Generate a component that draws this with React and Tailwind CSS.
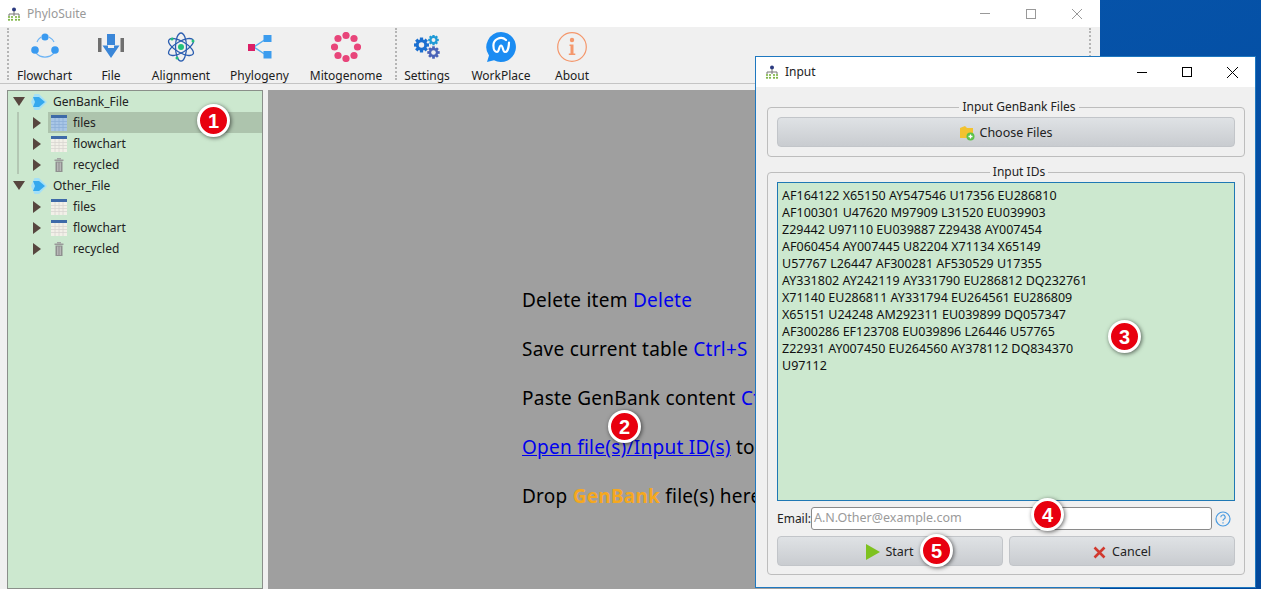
import React from "react";

const font = "font-['Noto_Sans','Noto_Sans_CJK_SC',sans-serif]";

// small tree logo used in both title bars
function AppLogo() {
  return (
    <svg width="14" height="14" viewBox="0 0 14 14">
      <circle cx="7" cy="2.5" r="2" fill="#2b3a80" />
      <path d="M7 4v3M2 9V7h10v2M7 7v2" stroke="#777" strokeWidth="1" fill="none" />
      {[2, 5, 9, 12].map((x) => (
        <g key={x} fill="#7cb342">
          <circle cx={x} cy="10" r="1.1" />
          <circle cx={x} cy="12.8" r="1.1" />
        </g>
      ))}
    </svg>
  );
}

function FlowchartIcon() {
  return (
    <svg width="30" height="30" viewBox="0 0 30 30">
      <path d="M7 10A12 12 0 0 1 11 5M19 5a12 12 0 0 1 5 5M6 21a12 12 0 0 0 18 0" stroke="#6db4f5" strokeWidth="1.2" fill="none" />
      <circle cx="15" cy="5" r="3.6" fill="#3a9af0" />
      <circle cx="5" cy="18" r="3.8" fill="#3a9af0" />
      <circle cx="25" cy="18" r="3.8" fill="#3a9af0" />
    </svg>
  );
}

function FileIcon() {
  return (
    <svg width="28" height="26" viewBox="0 0 28 26">
      <rect x="1" y="4" width="3.500" height="14" fill="#6f6f6f" />
      <rect x="23.500" y="4" width="3.500" height="14" fill="#6f6f6f" />
      <rect x="10" y="0" width="8" height="11" fill="#3a86d8" />
      <path d="M5.500 11.500H11V14h6v-2.500h5.500L14 24z" fill="#3a86d8" />
    </svg>
  );
}

function AlignmentIcon() {
  return (
    <svg width="30" height="30" viewBox="0 0 30 30" fill="none" stroke="#2a5db0" strokeWidth="1.300">
      <ellipse cx="15" cy="15" rx="14" ry="5.500" transform="rotate(30 15 15)" />
      <ellipse cx="15" cy="15" rx="14" ry="5.500" transform="rotate(-30 15 15)" />
      <ellipse cx="15" cy="15" rx="14" ry="5.500" transform="rotate(90 15 15)" />
      <circle cx="15" cy="15" r="3" fill="#22c07a" stroke="none" />
      <circle cx="27" cy="9" r="1.500" fill="#22c07a" stroke="none" />
      <circle cx="6" cy="7" r="1.500" fill="#22c07a" stroke="none" />
      <circle cx="11" cy="26" r="1.500" fill="#22c07a" stroke="none" />
    </svg>
  );
}

function PhylogenyIcon() {
  return (
    <svg width="24" height="24" viewBox="0 0 24 24">
      <path d="M6 12l12-8M6 12l12 8" stroke="#5aaef0" strokeWidth="1.500" />
      <rect x="0" y="9" width="7" height="7" fill="#dc1f66" />
      <rect x="15.500" y="0" width="8" height="7" fill="#3c9cee" />
      <rect x="15.500" y="16" width="8" height="7.500" fill="#3c9cee" />
    </svg>
  );
}

function MitogenomeIcon() {
  const dots = [[15, 3.500], [23, 6.500], [26.500, 15], [23, 23.500], [15, 26.500], [7, 23.500], [3.500, 15], [7, 6.500]];
  return (
    <svg width="30" height="30" viewBox="0 0 30 30">
      {dots.map(([x, y]) => (
        <circle key={x + "-" + y} cx={x} cy={y} r="3.600" fill="#e8457a" />
      ))}
    </svg>
  );
}

function Gear({ x, y, r, color }) {
  const teeth = [0, 45, 90, 135];
  return (
    <g transform={`translate(${x} ${y})`}>
      {teeth.map((a) => (
        <rect key={a} x={-r * 0.25} y={-r * 1.15} width={r * 0.5} height={r * 2.3} fill={color} transform={`rotate(${a})`} />
      ))}
      <circle r={r * 0.88} fill={color} />
      <circle r={r * 0.42} fill="#f0f0f0" />
    </g>
  );
}

function SettingsIcon() {
  return (
    <svg width="26" height="24" viewBox="0 0 26 24">
      <Gear x={7.500} y={10} r={6.500} color="#1a6fd0" />
      <Gear x={19.500} y={5} r={4.600} color="#1f9ad6" />
      <Gear x={19.500} y={17.500} r={5.400} color="#4a63b8" />
    </svg>
  );
}

function WorkPlaceIcon() {
  return (
    <svg width="30" height="30" viewBox="0 0 30 30">
      <path d="M15 0a15 15 0 1 1-7 28.300L1 30l2-6.500A15 15 0 0 1 15 0z" fill="#1b8cf2" />
      <path d="M23 10.500c0 0-.3 9.500-4 9.500-2.500 0-1.800-6.500-4-6.500s-1.500 6.500-4 6.500c-2 0-3.500-2.500-3.500-5.500A7.500 7.500 0 0 1 20 8" fill="none" stroke="#fff" strokeWidth="2.200" strokeLinecap="round" />
    </svg>
  );
}

function AboutIcon() {
  return (
    <svg width="30" height="30" viewBox="0 0 30 30">
      <circle cx="15" cy="15" r="14.300" fill="none" stroke="#f4976c" strokeWidth="1.200" />
      <circle cx="15" cy="8" r="2.200" fill="#f4976c" />
      <path d="M12.500 12.500h4v9h1.800v1.600h-6.500v-1.600h1.700v-7.400h-1z" fill="#f4976c" />
    </svg>
  );
}

function ToolItem({ label, width, children }) {
  return (
    <div className={`flex flex-col items-center justify-between h-[56px] pt-[5px] ${width}`}>
      <div className="h-[30px] flex items-center justify-center">{children}</div>
      <span className="text-[12px] leading-[15px] text-[#1c1c1c] whitespace-nowrap">{label}</span>
    </div>
  );
}

function Dots() {
  return <div className="w-0 h-[52px] border-l-2 border-dotted border-[#b5b5b5] mt-[1px]" />;
}

function FolderArrow() {
  return (
    <svg width="16" height="16" viewBox="0 0 16 16">
      <path d="M0 8l3.500-8h4.500l8 8-8 8H3.500z" fill="#a4e0f7" />
      <path d="M2 3h6l6 5-6 5H2l2-5z" fill="#35a8ee" />
    </svg>
  );
}

function TableIcon({ active }) {
  return (
    <svg width="16" height="16" viewBox="0 0 16 16">
      <rect x="0" y="0" width="16" height="16" fill={active ? "#a9c6e6" : "#f2f0e8"} />
      <rect x="0" y="0" width="16" height="3" fill="#3e6aa8" />
      <path d="M0 6.500h16M0 9.500h16M0 12.500h16M4 3v13M8 3v13M12 3v13" stroke={active ? "#8eb0d8" : "#d8d6d0"} strokeWidth="0.800" />
    </svg>
  );
}

function TrashIcon() {
  return (
    <svg width="16" height="16" viewBox="0 0 16 16">
      <rect x="6" y="1" width="4" height="1.500" fill="#a3a3a3" />
      <rect x="3.500" y="2.500" width="9" height="1.500" fill="#9a9a9a" />
      <path d="M4.500 4.500h7V15h-7z" fill="#8f8f8f" />
      <path d="M6.500 5.500V14M8 5.500V14M9.500 5.500V14" stroke="#c9c9c9" strokeWidth="0.700" />
    </svg>
  );
}

function Caret({ open }) {
  if (open) {
    return (
      <svg width="12" height="9" viewBox="0 0 12 9">
        <path d="M0 0h12L6 9z" fill="#57463f" />
      </svg>
    );
  }
  return (
    <svg width="8" height="12" viewBox="0 0 8 12">
      <path d="M0 0v12L8 6z" fill="#57463f" />
    </svg>
  );
}

function RootRow({ label }) {
  return (
    <div className="flex items-center h-[21px] pl-[4px]">
      <div className="w-[14px] flex justify-center"><Caret open /></div>
      <div className="ml-[5px]"><FolderArrow /></div>
      <span className="ml-[6px] text-[12px] text-[#222]">{label}</span>
    </div>
  );
}

function ChildRow({ label, icon, active }) {
  return (
    <div className="flex items-center h-[21px]">
      <div className="w-[40px] flex justify-end pr-[7px]">
        <Caret />
      </div>
      <div className={`flex items-center flex-1 h-[21px] pl-[3px] ${active ? "bg-[#adc4ad]" : ""}`}>
        {icon}
        <span className="ml-[6px] text-[12px] text-[#222]">{label}</span>
      </div>
    </div>
  );
}

function Badge({ n, className }) {
  return (
    <div className={`absolute w-[33px] h-[33px] rounded-full bg-[#e8000f] border-[3px] border-white shadow-[1px_1px_4px_rgba(0,0,0,0.6)] flex items-center justify-center text-white font-bold text-[20px] leading-none font-['Liberation_Sans',sans-serif] ${className}`}>
      {n}
    </div>
  );
}

function HelpLine({ children }) {
  return <p className="h-[49px] text-[19px] tracking-[0.25px] leading-[49px] text-black whitespace-nowrap">{children}</p>;
}

function GroupBox({ title, className, children }) {
  return (
    <div className={`relative border border-[#bdbdbd] rounded-[4px] ${className}`}>
      <span className="absolute -top-[9px] left-0 right-0 flex justify-center pl-[26px]">
        <span className="bg-[#f0f0f0] px-[3px] text-[12px] leading-[16px] text-[#222]">{title}</span>
      </span>
      {children}
    </div>
  );
}

function QtButton({ className, children }) {
  return (
    <div className={`flex items-center justify-center h-[30px] pt-[2px] rounded-[4px] border border-[#c2c5c9] bg-gradient-to-b from-[#dfe2e5] to-[#c9ccd0] text-[12.500px] text-[#222] ${className}`}>
      {children}
    </div>
  );
}

const ids = [
  "AF164122 X65150 AY547546 U17356 EU286810",
  "AF100301 U47620 M97909 L31520 EU039903",
  "Z29442 U97110 EU039887 Z29438 AY007454",
  "AF060454 AY007445 U82204 X71134 X65149",
  "U57767 L26447 AF300281 AF530529 U17355",
  "AY331802 AY242119 AY331790 EU286812 DQ232761",
  "X71140 EU286811 AY331794 EU264561 EU286809",
  "X65151 U24248 AM292311 EU039899 DQ057347",
  "AF300286 EF123708 EU039896 L26446 U57765",
  "Z22931 AY007450 EU264560 AY378112 DQ834370",
  "U97112",
];

export default function App() {
  return (
    <div className={`relative w-[1261px] h-[589px] overflow-hidden bg-gradient-to-br from-[#0a5cb4] to-[#02479a] ${font}`}>
      {/* main window */}
      <div className="w-[1100px] h-[589px] bg-[#f0f0f0] flex flex-col">
        <div className="h-[27px] bg-white flex items-center pl-[7px]">
          <AppLogo />
          <span className="ml-[6px] text-[12px] text-[#999]">PhyloSuite</span>
          <div className="ml-auto flex items-center gap-[36px] pr-[18px]">
            <div className="w-[10px] h-px bg-[#999]" />
            <div className="w-[10px] h-[10px] border border-[#999]" />
            <svg width="10" height="10" viewBox="0 0 10 10"><path d="M0 0l10 10M10 0L0 10" stroke="#999" /></svg>
          </div>
        </div>

        <div className="h-[57px] flex border-b border-[#c4c4c4] pl-[7px] pr-[9px]">
          <Dots />
          <div className="flex ml-[3px]">
            <ToolItem label="Flowchart" width="w-[65px]"><FlowchartIcon /></ToolItem>
            <ToolItem label="File" width="w-[68px]"><FileIcon /></ToolItem>
            <ToolItem label="Alignment" width="w-[72px]"><AlignmentIcon /></ToolItem>
            <ToolItem label="Phylogeny" width="w-[85px]"><PhylogenyIcon /></ToolItem>
            <ToolItem label="Mitogenome" width="w-[88px]"><MitogenomeIcon /></ToolItem>
          </div>
          <div className="ml-[5px]"><Dots /></div>
          <div className="flex">
            <ToolItem label="Settings" width="w-[60px]"><SettingsIcon /></ToolItem>
            <ToolItem label="WorkPlace" width="w-[88px]"><WorkPlaceIcon /></ToolItem>
            <ToolItem label="About" width="w-[54px]"><AboutIcon /></ToolItem>
          </div>
          <div className="ml-auto"><Dots /></div>
        </div>

        <div className="flex-1 flex pt-[6px] pl-[7px] min-h-0">
          <div className="relative w-[256px] border border-[#8a8f8a] bg-[#cce8cf]">
            <div className="absolute left-[9px] top-[21px] h-[62px] w-[2px] bg-[#b3c7b3]" />
            <RootRow label="GenBank_File" />
            <ChildRow label="files" active icon={<TableIcon active />} />
            <ChildRow label="flowchart" icon={<TableIcon />} />
            <ChildRow label="recycled" icon={<TrashIcon />} />
            <RootRow label="Other_File" />
            <ChildRow label="files" icon={<TableIcon />} />
            <ChildRow label="flowchart" icon={<TableIcon />} />
            <ChildRow label="recycled" icon={<TrashIcon />} />
          </div>
          <div className="flex-1 ml-[5px] bg-[#9f9f9f] pl-[254px] pt-[186px] overflow-hidden">
            <HelpLine>Delete item <span className="text-[#0000ee]">Delete</span></HelpLine>
            <HelpLine>Save current table <span className="text-[#0000ee]">Ctrl+S</span></HelpLine>
            <HelpLine>Paste GenBank content <span className="text-[#0000ee]">Ctrl+V</span></HelpLine>
            <HelpLine><span className="text-[#0000ee] underline">Open file(s)/Input ID(s)</span> to load</HelpLine>
            <HelpLine>Drop <span className="text-[#f5a81f] font-bold">GenBank</span> file(s) here</HelpLine>
          </div>
        </div>
      </div>

      {/* Input dialog, floating window */}
      <div className="absolute left-[755px] top-[56px] w-[501px] h-[532px] border border-[#1e78c0] bg-[#f0f0f0] flex flex-col">
        <div className="h-[30px] bg-white flex items-center pl-[9px] shrink-0">
          <AppLogo />
          <span className="ml-[6px] text-[12px] text-[#222]">Input</span>
          <div className="ml-auto flex items-center gap-[35px] pr-[17px]">
            <div className="w-[10px] h-px bg-black" />
            <div className="w-[10px] h-[10px] border border-black" />
            <svg width="11" height="11" viewBox="0 0 11 11"><path d="M0 0l11 11M11 0L0 11" stroke="#000" /></svg>
          </div>
        </div>
        <div className="flex-1 flex flex-col pl-[11px] pr-[10px] pt-[20px] pb-[12px] min-h-0">
          <GroupBox title="Input GenBank Files" className="h-[50px] px-[9px] pt-[9px]">
            <QtButton>
              <svg width="16" height="16" viewBox="0 0 16 16" className="mr-[4px]">
                <path d="M1 3l5-2 2 2h6v10H1z" fill="#f2c230" />
                <circle cx="11.500" cy="11.500" r="4" fill="#5cc24a" />
                <path d="M11.500 9.500v4M9.500 11.500h4" stroke="#fff" strokeWidth="1.300" />
              </svg>
              Choose Files
            </QtButton>
          </GroupBox>
          <GroupBox title="Input IDs" className="flex-1 mt-[15px] px-[9px] pt-[9px] flex flex-col min-h-0">
            <div className="h-[319px] border border-[#1f78b4] bg-[#cce8cf] pl-[4px] pt-[4px] text-[12.500px] leading-[17px] text-[#111]">
              {ids.map((line) => (
                <div key={line} className="whitespace-nowrap">{line}</div>
              ))}
            </div>
            <div className="flex items-center h-[23px] mt-[6px]">
              <span className="w-[33px] text-[12px] text-[#222] whitespace-nowrap">Email:</span>
              <div className="ml-[1px] flex-1 h-[23px] bg-white border border-[#8a8a8a] rounded-[3px] flex items-center pl-[2px] text-[12.500px] text-[#9a9a9a]">
                A.N.Other@example.com
              </div>
              <svg width="16" height="16" viewBox="0 0 16 16" className="ml-[3px] mr-[4px]">
                <circle cx="8" cy="8" r="7" fill="none" stroke="#4a9be0" strokeWidth="1.200" />
                <path d="M5.800 6.200a2.200 2.200 0 1 1 3.300 1.900c-.8.500-1.100.9-1.100 1.700M8 11.200v1.300" fill="none" stroke="#4a9be0" strokeWidth="1.200" />
              </svg>
            </div>
            <div className="flex gap-[6px] mt-[6px]">
              <QtButton className="flex-1">
                <svg width="14" height="16" viewBox="0 0 14 16" className="mr-[5px]">
                  <path d="M0 0l14 8L0 16z" fill="#7ec21f" />
                </svg>
                Start
              </QtButton>
              <QtButton className="flex-1">
                <svg width="13" height="13" viewBox="0 0 13 13" className="mr-[6px]">
                  <path d="M1.500 1.500l10 10M11.500 1.500l-10 10" stroke="#d1392e" strokeWidth="2.600" />
                </svg>
                Cancel
              </QtButton>
            </div>
          </GroupBox>
        </div>
      </div>

      <Badge n="1" className="left-[197px] top-[104px]" />
      <Badge n="2" className="left-[608px] top-[410px]" />
      <Badge n="3" className="left-[1108px] top-[320px]" />
      <Badge n="4" className="left-[1031px] top-[498px]" />
      <Badge n="5" className="left-[920px] top-[534px]" />
    </div>
  );
}
